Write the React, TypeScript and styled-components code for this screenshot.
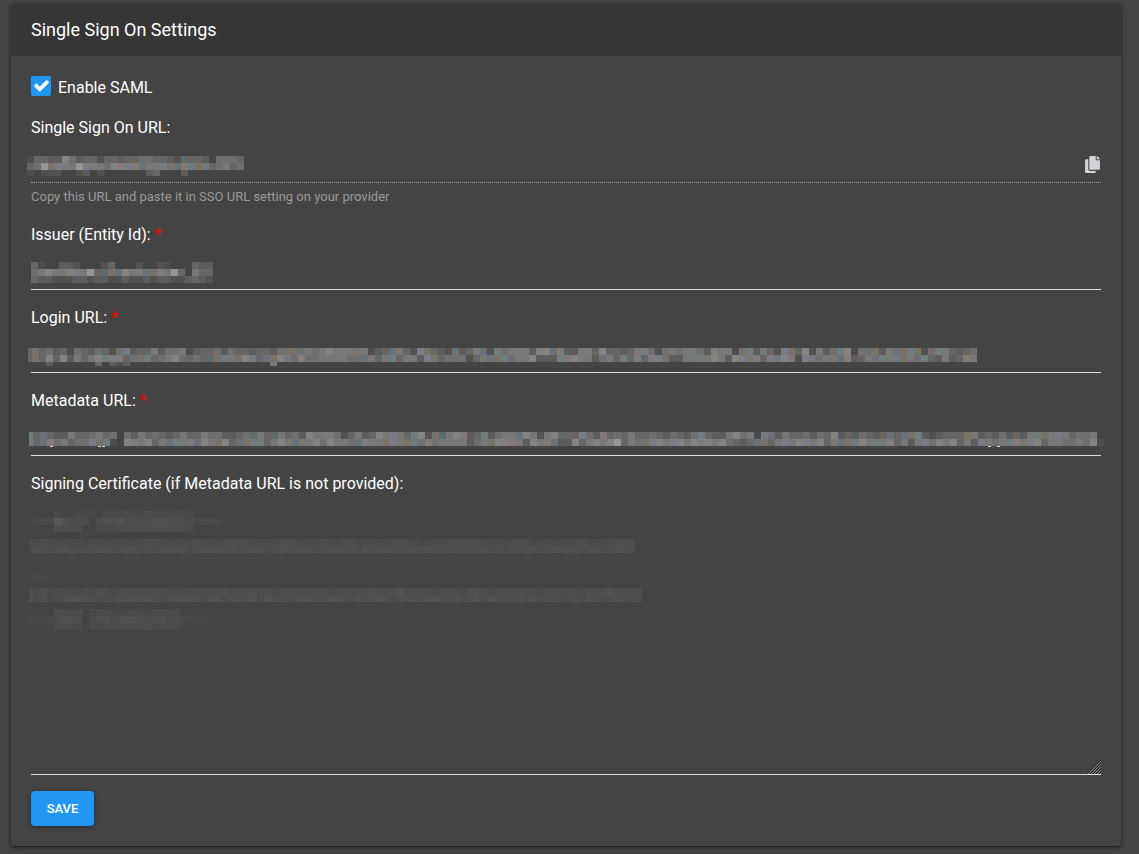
import React from "react";
import styled, { createGlobalStyle } from "styled-components";
import { FaCopy } from "react-icons/fa";

const GlobalStyle = createGlobalStyle`
  *, *::before, *::after { box-sizing: border-box; }
  body {
    margin: 0;
    background: #444444;
    color: #ffffff;
    color-scheme: dark;
    font-family: Roboto, "Liberation Sans", sans-serif;
    font-size: 16px;
    line-height: 24px;
  }
`;

const Page = styled.main`
  padding: 4px 18px 8px 11px;
`;

const Card = styled.section`
  background: #444444;
  border-radius: 4px;
  box-shadow: 0 2px 1px -1px rgba(0, 0, 0, 0.2), 0 1px 1px rgba(0, 0, 0, 0.14),
    0 1px 4px 1px rgba(0, 0, 0, 0.36);
`;

const CardHeader = styled.header`
  padding: 14px 20px;
  border-radius: 4px 4px 0 0;
  background: #363636;
`;

const Title = styled.h1`
  margin: 0;
  font-size: 18px;
  line-height: 24px;
  font-weight: 400;
`;

const Form = styled.form`
  display: flex;
  flex-direction: column;
  gap: 16px;
  padding: 20px;
`;

const CheckRow = styled.label`
  display: flex;
  align-items: flex-start;
  gap: 7px;
  height: 24px;
`;

const CheckBoxWrap = styled.span`
  position: relative;
  width: 20px;
  height: 20px;
`;

const CheckMark = styled.svg`
  position: absolute;
  top: 1px;
  left: 2px;
  fill: #ffffff;
  pointer-events: none;
`;

const CheckBox = styled.input`
  appearance: none;
  display: block;
  width: 20px;
  height: 20px;
  margin: 0;
  border: 2px solid #dedede;
  border-radius: 2px;

  &:checked {
    border-color: #2196f3;
    background: #2196f3;
  }

  &:not(:checked) + svg {
    display: none;
  }
`;

const FieldBlock = styled.div`
  display: flex;
  flex-direction: column;
`;

const FieldLabel = styled.label`
  margin-bottom: 7px;
`;

const Required = styled.span`
  color: #ff0000;
`;

const Control = styled.div<{ $dotted?: boolean }>`
  position: relative;
  display: flex;
  align-items: center;
  border-bottom: 1px ${(p) => (p.$dotted ? "dotted #a2a2a2" : "solid #dedede")};
`;

const TextInput = styled.input`
  flex: 1;
  min-width: 0;
  height: 35px;
  padding: 0;
  border: 0;
  outline: 0;
  background: transparent;
  color: #ffffff;
  font: inherit;
`;

const TextArea = styled.textarea`
  display: block;
  width: 100%;
  height: 271px;
  padding: 7px 0;
  border: 0;
  outline: 0;
  background: transparent;
  color: #ffffff;
  font: inherit;
  resize: vertical;

  &::-webkit-resizer {
    background: transparent;
  }
`;

const Grip = styled.svg`
  position: absolute;
  right: 0;
  bottom: 0;
  pointer-events: none;
`;

const CopyButton = styled.button`
  display: flex;
  padding: 0;
  border: 0;
  background: transparent;
  color: #ced4da;
  cursor: pointer;
`;

const Hint = styled.small`
  margin-top: 4px;
  color: #9b9b9b;
  font-size: 13px;
  line-height: 20px;
`;

const SaveButton = styled.button`
  align-self: flex-start;
  min-width: 63px;
  height: 35px;
  padding: 0 15px;
  border: 0;
  border-radius: 4px;
  background: #2196f3;
  color: #ffffff;
  font: inherit;
  font-size: 13px;
  font-weight: 500;
  text-transform: uppercase;
  box-shadow: 0 1px 4px rgba(0, 0, 0, 0.45);
  cursor: pointer;
`;

/* Pixelated cover laid over a confidential value. */
const Cover = styled.svg<{ $left: number; $top: number; $faint?: boolean }>`
  position: absolute;
  left: ${(p) => p.$left}px;
  top: ${(p) => p.$top}px;
  opacity: ${(p) => (p.$faint ? 0.24 : 1)};
  pointer-events: none;
`;

const shades: Record<string, string> = {
  a: "#4c4d52",
  b: "#525250",
  c: "#5d5d5e",
  d: "#676665",
  e: "#6e6f6e",
  f: "#787876",
  g: "#838382",
  h: "#969692",
  m: "#6b7179",
  n: "#7b7c87",
  o: "#877d78",
  p: "#7a7266",
  q: "#6f7d80",
  r: "#837978",
  s: "#5f6a6c",
};

const CELL = 7;

type MosaicProps = {
  rows: string[];
  left: number;
  top: number;
  lead?: number;
  lastRow?: number;
  faint?: boolean;
  marks?: number[];
};

function Mosaic({ rows, left, top, lead = CELL, lastRow = CELL, faint, marks = [] }: MosaicProps) {
  const columns = Math.max(...rows.map((row) => row.length));
  const cellX = (column: number) => (column === 0 ? 0 : lead + (column - 1) * CELL);
  return (
    <Cover
      $left={left}
      $top={top}
      $faint={faint}
      width={cellX(columns)}
      height={rows.length * CELL}
      shapeRendering="crispEdges"
      aria-hidden="true"
    >
      {rows.flatMap((row, y) =>
        [...row].map((shade, x) =>
          shade === "." ? null : (
            <rect
              key={`${x}-${y}`}
              x={cellX(x)}
              y={y * CELL}
              width={x === 0 ? lead : CELL}
              height={y === 2 ? lastRow : CELL}
              fill={shades[shade]}
            />
          )
        )
      )}
      {marks.map((x) => (
        <rect key={x} x={x} y={14} width={3} height={1} fill="#d5d5d5" />
      ))}
    </Cover>
  );
}

const ssoRows = [
  "addccgecddbddcddmmddcbsddc.eeed",
  "dehpnrfhnrfegonrmffnpmrqpfdefde",
  "a.abb..bc.b......cd...c",
];

const issuerRows = [
  "da..ccb...bd...b..ba...dcc",
  "mfgffonfhdspmgfrmpnfhd.fdd",
  "dccbbbccbccabcbbcbccbbcdcb",
];

const loginRows = [
  "spdecdamdcmdbmqcddfceefacddeceddcddceppmfefgf" +
    "ffpfacdmfdbnpdcbmcdfmbqeffqcggmrccfndgddcdfnebefeqfecof" +
    "fapqcqdbnpdgbfceqgapmpcfmpqpbeqfdcde",
  "spdgdgcfdfgqnrdmpqdefgedmdspqfpgqsmpgfeoemfff" +
    "feemfsfqdffcnpdeembsfmpqeffgcccqrgffcmfdfsrsrnpccffqfgf" +
    "cgnfrdnqgrbnfeffmocdfmqfqpfeqdcfcdof",
  "...c......d.cbc....................f",
];

const metadataRows = [
  "qdmdccfddefde.ecfdedcdfddfeeccdesfdsfdecgfffebdfcdgf" +
    "nfdqgbpsfgrcdqceffmgfbfgsddnecrdedfddedcedceqdc" +
    "cfgefaqmcfddecedgcdcedcdmdmpqcbcdddpfcdcecdcfqpfnfdeef",
  "qdmoefdmenpqa.gnfgdfmqfnegfpgdmpfqdfgfmffgegffemnffp" +
    "nfpqmomffffcefpgorfcgfrmccgsfgfghdfmpngfngfgngf" +
    "gedcsmpdfnfgnfgdfmpqgfqfodfcfnegfgdfcnfefqofngdffeefega",
];

const certificateRows = [
  { top: 8, rows: ["....cbbccc.cccdccdcccdcc", "bbcchfdmm.dfegeeeeffeeedcccb", "....eddd..cccddddeeeeedc"] },
  {
    top: 36,
    rows: [
      "dcedcdccbddcdddcdeedcddceddcdmeddccdemdcddedcmecddcddedcbcddedmdedddcdedbcdcdcdedcddfed",
      "depdefdedeffdeffdedefefdeffeefdefedeffefedeefefdfmefedefefmpdeefefdmdfefedeffeedeedeffe",
      "......b.......bb......bb..........b.b............................b.....b.....bb",
    ],
  },
  { top: 71, rows: ["bbb"] },
  {
    top: 85,
    rows: [
      "mcfcdcccdcpdcdeddddecdcdddedfdmdedecdeddmdecdeddmfedfgdeddceedcffeceddeddceddddcedegeded",
      "ndecdeffeededfefefedefefedffdefefdfeedeffeeffedfeegpdffpeffeefdefdfeemfdfdeedmedfedmfede",
      "...................................................bbb......bb......bb........b",
    ],
  },
  { top: 106, rows: ["....edcd.cddcccdccdddc", "bbbcdfmm.dffdeffedefdeccbb", "....dddc.dcddddddecddc"] },
];

type FieldProps = {
  id: string;
  label: string;
  required?: boolean;
  children: React.ReactNode;
};

function Field({ id, label, required, children }: FieldProps) {
  return (
    <FieldBlock>
      <FieldLabel htmlFor={id}>
        {label} {required && <Required>*</Required>}
      </FieldLabel>
      {children}
    </FieldBlock>
  );
}

export default function App() {
  return (
    <>
      <GlobalStyle />
      <Page>
        <Card>
          <CardHeader>
            <Title>Single Sign On Settings</Title>
          </CardHeader>
          <Form onSubmit={(event) => event.preventDefault()}>
            <CheckRow>
              <CheckBoxWrap>
                <CheckBox type="checkbox" defaultChecked />
                <CheckMark width="17" height="17" viewBox="0 0 1792 1792" aria-hidden="true">
                  <path d="M1671 566q0 40-28 68l-724 724-136 136q-28 28-68 28t-68-28l-136-136-362-362q-28-28-28-68t28-68l136-136q28-28 68-28t68 28l294 295 656-657q28-28 68-28t68 28l136 136q28 28 28 68z" />
                </CheckMark>
              </CheckBoxWrap>
              Enable SAML
            </CheckRow>

            <Field id="sso-url" label="Single Sign On URL:">
              <Control $dotted>
                <TextInput id="sso-url" type="text" readOnly />
                <Mosaic rows={ssoRows} left={-4} top={9} lastRow={6} />
                <CopyButton type="button" aria-label="Copy URL">
                  <FaCopy size={17} />
                </CopyButton>
              </Control>
              <Hint>Copy this URL and paste it in SSO URL setting on your provider</Hint>
            </Field>

            <Field id="issuer" label="Issuer (Entity Id):" required>
              <Control>
                <TextInput id="issuer" type="text" />
                <Mosaic rows={issuerRows} left={0} top={8} />
              </Control>
            </Field>

            <Field id="login-url" label="Login URL:" required>
              <Control>
                <TextInput id="login-url" type="text" />
                <Mosaic rows={loginRows} left={-3} top={11} lead={4} lastRow={4} />
              </Control>
            </Field>

            <Field id="metadata-url" label="Metadata URL:" required>
              <Control>
                <TextInput id="metadata-url" type="text" />
                <Mosaic rows={[...metadataRows, ""]} left={-2} top={12} lead={4} marks={[21, 69, 73, 959, 968]} />
              </Control>
            </Field>

            <Field id="certificate" label="Signing Certificate (if Metadata URL is not provided):">
              <Control>
                <TextArea id="certificate" />
                {certificateRows.map(({ top, rows }) => (
                  <Mosaic key={top} rows={rows} left={-2} top={top} lead={4} faint />
                ))}
                <Grip width="15" height="15" aria-hidden="true">
                  <path d="M1 15L15 1M4 15L15 4M7 15L15 7M10 15L15 10M13 15L15 13" stroke="#1e1e1e" />
                  <path d="M2 15L15 2M5 15L15 5M8 15L15 8M11 15L15 11M14 15L15 14" stroke="#8c8c8c" />
                </Grip>
              </Control>
            </Field>

            <SaveButton type="submit">Save</SaveButton>
          </Form>
        </Card>
      </Page>
    </>
  );
}
